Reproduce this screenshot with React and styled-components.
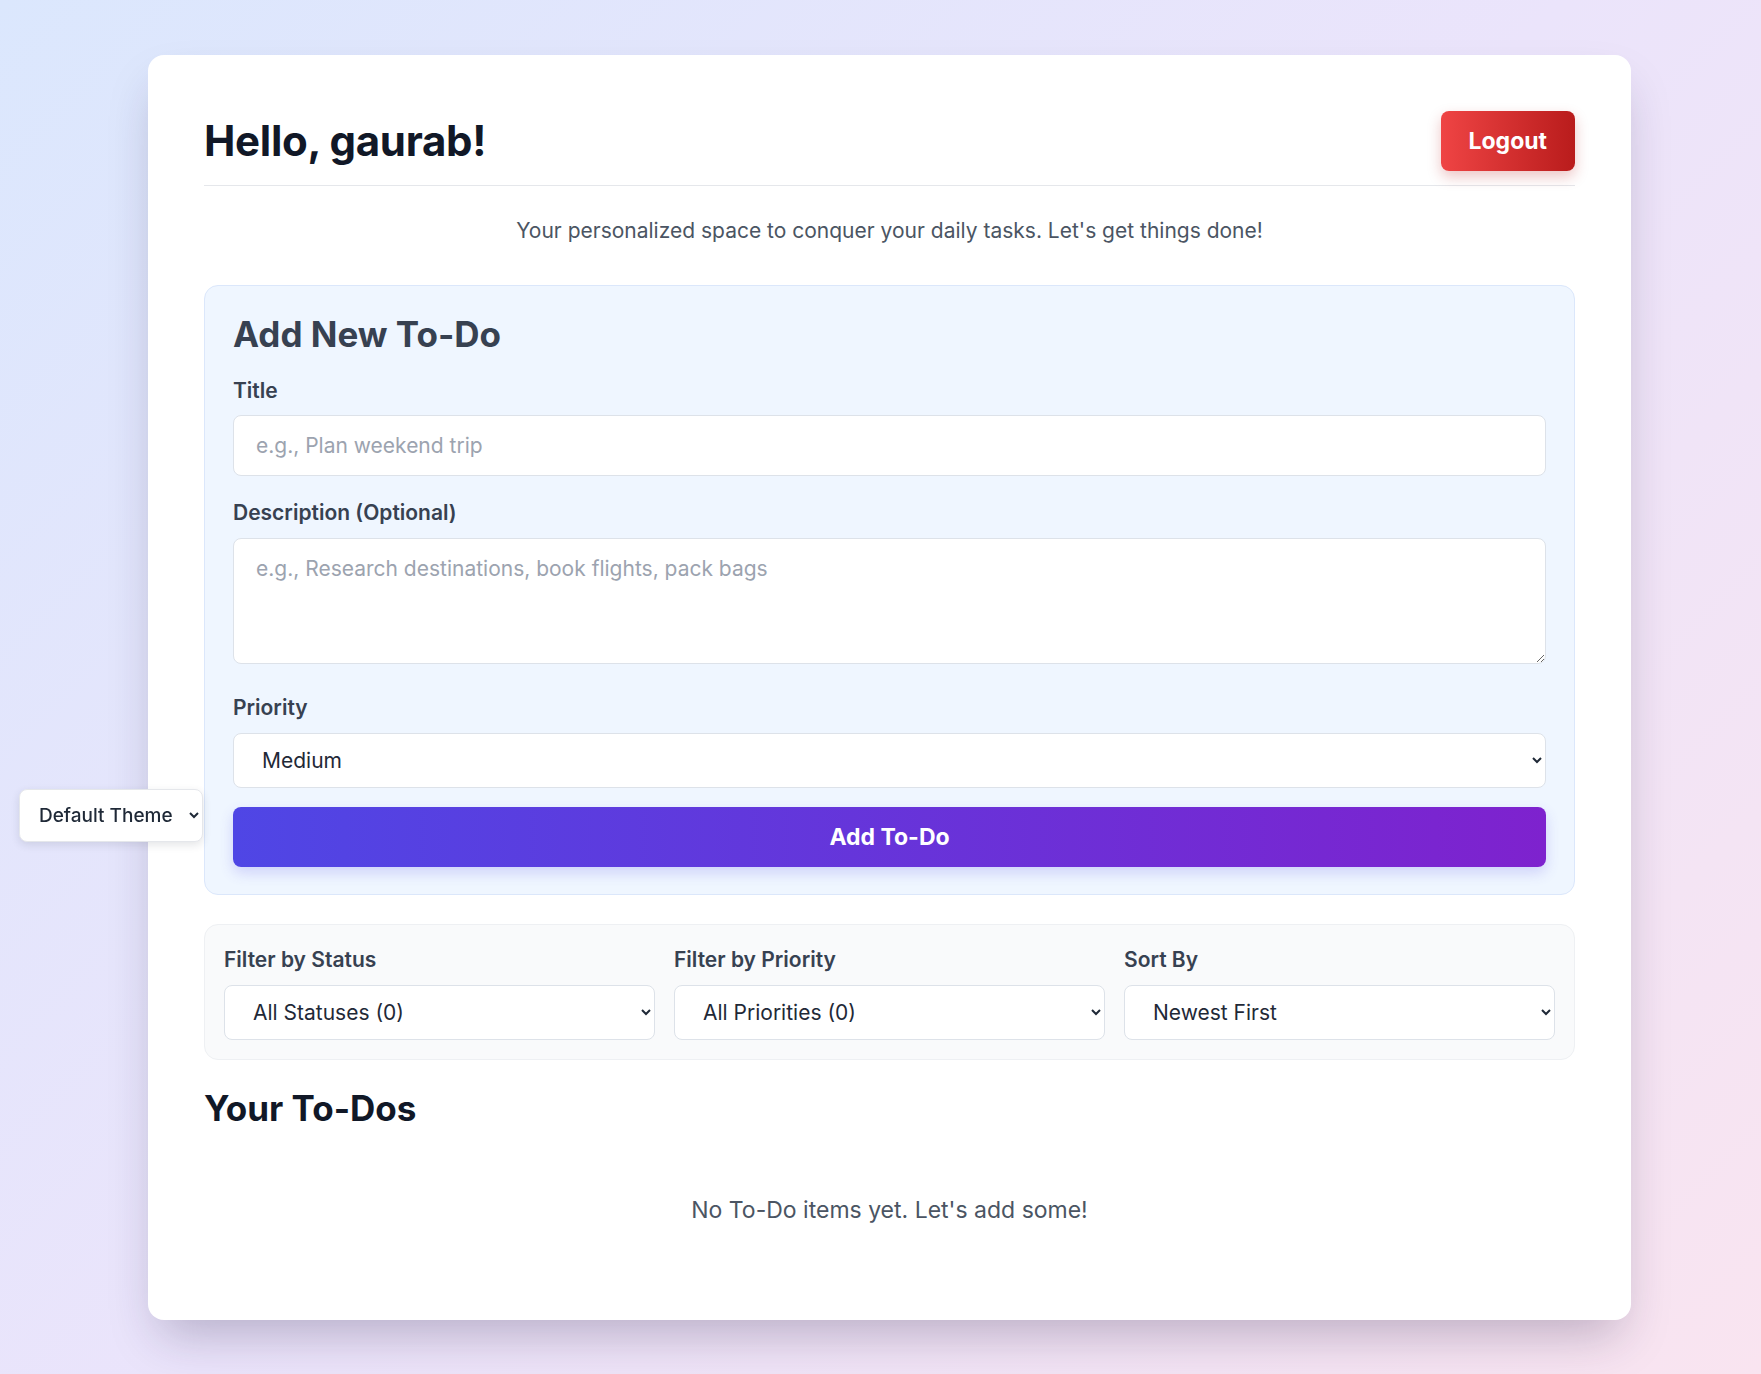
import React, { useState } from 'react';
import styled, { createGlobalStyle } from 'styled-components';

const GlobalStyle = createGlobalStyle`
    * {
        box-sizing: border-box;
    }

    body {
        margin: 0;
        min-height: 100vh;
        font-family: Inter, "Noto Sans", sans-serif;
        background: linear-gradient(135deg, #dbe7fd 0%, #ebe4fb 50%, #f9e4f0 100%);
        background-attachment: fixed;
        color: #111827;
    }
`;

const Page = styled.div`
    padding: 55px 0 60px 148px;
`;

const ThemeSelect = styled.select`
    position: fixed;
    left: 19px;
    top: 789px;
    width: 184px;
    height: 53px;
    padding: 0 6px 0 15px;
    font-family: Inter, sans-serif;
    font-size: 19px;
    font-weight: 500;
    color: #1f2937;
    background: #fff;
    border: 1px solid #e5e7eb;
    border-radius: 8px;
    box-shadow: 0 3px 8px rgba(31, 41, 55, 0.12);
    z-index: 10;
`;

const Card = styled.main`
    width: 1483px;
    padding: 56px;
    background: #fff;
    border-radius: 16px;
    box-shadow: 0 25px 50px -12px rgba(40, 30, 70, 0.28);
`;

const Header = styled.header`
    display: flex;
    justify-content: space-between;
    align-items: center;
    padding-bottom: 14px;
    border-bottom: 1px solid #e5e7eb;
`;

const Greeting = styled.h1`
    margin: 0;
    font-size: 42px;
    line-height: 1.2;
    font-weight: 700;
    letter-spacing: -0.3px;
    color: #111827;
`;

const LogoutButton = styled.button`
    height: 60px;
    padding: 0 28px;
    border: none;
    border-radius: 8px;
    font-family: Inter, sans-serif;
    font-size: 23px;
    font-weight: 700;
    color: #fff;
    background: linear-gradient(90deg, #ef4444, #b91c1c);
    box-shadow: 0 6px 14px rgba(185, 28, 28, 0.25);
    cursor: pointer;
`;

const Tagline = styled.p`
    margin: 29px 0 38px;
    text-align: center;
    font-size: 21px;
    line-height: 1.5;
    color: #4b5563;
`;

const FormPanel = styled.form`
    display: flex;
    flex-direction: column;
    padding: 27px 28px 27px;
    background: #eff6ff;
    border: 1px solid #dbe7fb;
    border-radius: 14px;
`;

const PanelTitle = styled.h2`
    margin: 0 0 21px;
    font-size: 35px;
    line-height: 1.2;
    font-weight: 700;
    color: #374151;
`;

const Field = styled.div`
    display: flex;
    flex-direction: column;
    margin-bottom: ${props => props.$gap ?? 22}px;
`;

const Label = styled.label`
    margin-bottom: ${props => props.$gap ?? 9}px;
    font-size: 21px;
    line-height: 1.45;
    font-weight: 600;
    color: #374151;
`;

const TextInput = styled.input`
    display: block;
    width: 100%;
    height: 61px;
    padding: 0 22px;
    font-family: Inter, sans-serif;
    font-size: 21px;
    color: #1f2937;
    background: #fff;
    border: 1px solid #dde2e9;
    border-radius: 8px;

    &::placeholder {
        color: #9ca3af;
    }
`;

const TextArea = styled.textarea`
    display: block;
    width: 100%;
    height: 126px;
    padding: 14px 22px;
    font-family: Inter, sans-serif;
    font-size: 21px;
    line-height: 1.5;
    color: #1f2937;
    background: #fff;
    border: 1px solid #dde2e9;
    border-radius: 8px;
    resize: vertical;

    &::placeholder {
        color: #9ca3af;
    }
`;

const Select = styled.select`
    display: block;
    width: 100%;
    height: 55px;
    padding: 0 6px 0 24px;
    font-family: Inter, sans-serif;
    font-size: 21px;
    color: #1f2937;
    background: #fff;
    border: 1px solid #dde2e9;
    border-radius: 8px;
`;

const SubmitButton = styled.button`
    height: 60px;
    margin-top: 19px;
    border: none;
    border-radius: 8px;
    font-family: Inter, sans-serif;
    font-size: 23px;
    font-weight: 700;
    color: #fff;
    background: linear-gradient(90deg, #4f46e5, #7e22ce);
    box-shadow: 0 6px 14px rgba(79, 70, 229, 0.2);
    cursor: pointer;
`;

const FilterBar = styled.section`
    display: grid;
    grid-template-columns: repeat(3, 1fr);
    gap: 19px;
    margin-top: 29px;
    padding: 20px 19px 19px;
    background: #f9fafb;
    border: 1px solid #eef0f3;
    border-radius: 14px;
`;

const FilterGroup = styled.div`
    display: flex;
    flex-direction: column;
`;

const SectionTitle = styled.h2`
    margin: 27px 0 26px;
    font-size: 35px;
    line-height: 1.2;
    font-weight: 700;
    color: #111827;
`;

const EmptyState = styled.p`
    margin: 0;
    padding: 38px 0 36px;
    text-align: center;
    font-size: 23px;
    line-height: 1.5;
    color: #4b5563;
`;

const App = () => {
    const [priority, setPriority] = useState('medium');

    return (
        <>
            <GlobalStyle />
            <ThemeSelect defaultValue="default">
                <option value="default">Default Theme</option>
                <option value="dark">Dark Theme</option>
            </ThemeSelect>
            <Page>
                <Card>
                    <Header>
                        <Greeting>Hello, gaurab!</Greeting>
                        <LogoutButton>Logout</LogoutButton>
                    </Header>
                    <Tagline>
                        Your personalized space to conquer your daily tasks. Let's get things done!
                    </Tagline>

                    <FormPanel onSubmit={e => e.preventDefault()}>
                        <PanelTitle>Add New To-Do</PanelTitle>
                        <Field>
                            <Label htmlFor="title">Title</Label>
                            <TextInput id="title" placeholder="e.g., Plan weekend trip" />
                        </Field>
                        <Field $gap={29}>
                            <Label htmlFor="desc" $gap={10}>Description (Optional)</Label>
                            <TextArea id="desc" placeholder="e.g., Research destinations, book flights, pack bags" />
                        </Field>
                        <Field $gap={0}>
                            <Label htmlFor="priority" $gap={9}>Priority</Label>
                            <Select id="priority" value={priority} onChange={e => setPriority(e.target.value)}>
                                <option value="low">Low</option>
                                <option value="medium">Medium</option>
                                <option value="high">High</option>
                            </Select>
                        </Field>
                        <SubmitButton type="submit">Add To-Do</SubmitButton>
                    </FormPanel>

                    <FilterBar>
                        <FilterGroup>
                            <Label $gap={10}>Filter by Status</Label>
                            <Select defaultValue="all">
                                <option value="all">All Statuses (0)</option>
                            </Select>
                        </FilterGroup>
                        <FilterGroup>
                            <Label $gap={10}>Filter by Priority</Label>
                            <Select defaultValue="all">
                                <option value="all">All Priorities (0)</option>
                            </Select>
                        </FilterGroup>
                        <FilterGroup>
                            <Label $gap={10}>Sort By</Label>
                            <Select defaultValue="newest">
                                <option value="newest">Newest First</option>
                            </Select>
                        </FilterGroup>
                    </FilterBar>

                    <SectionTitle>Your To-Dos</SectionTitle>
                    <EmptyState>No To-Do items yet. Let's add some!</EmptyState>
                </Card>
            </Page>
        </>
    );
};

export default App;
